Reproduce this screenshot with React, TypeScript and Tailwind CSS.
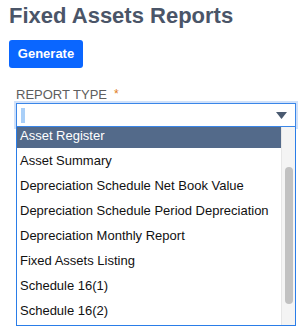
import React from "react";

const items = [
  "Asset Register",
  "Asset Summary",
  "Depreciation Schedule Net Book Value",
  "Depreciation Schedule Period Depreciation",
  "Depreciation Monthly Report",
  "Fixed Assets Listing",
  "Schedule 16(1)",
  "Schedule 16(2)",
];

export default function App() {
  return (
    <div className="w-[302px] h-[327px] overflow-hidden bg-white font-['Liberation_Sans',Arial,sans-serif]">
      <div className="pl-[9px] pt-[3px]">
        <h1 className="text-[22px] leading-[26px] font-bold text-[#4a5568]">
          Fixed Assets Reports
        </h1>
        <button className="mt-[11px] h-[28px] w-[74px] rounded-[3px] bg-[#0a66ff] text-white text-[13px] font-bold">
          Generate
        </button>
      </div>
      <div className="pl-[16px] pr-[6px] mt-[19px]">
        <div className="flex items-center gap-[7px] text-[13px] leading-[15px] text-[#5e5e5e]">
          <span>REPORT TYPE</span>
          <span className="text-[#e07b20] text-[12px]">*</span>
        </div>
        <div className="mt-[1px] h-[24px] border border-[#3a86e8] shadow-[0_0_0_2px_rgba(120,170,240,0.35)] flex items-center justify-between pl-[4px] pr-[8px]">
          <div className="w-[4px] h-[15px] bg-[#a9cff8]" />
          <svg width="11" height="7" viewBox="0 0 11 7">
            <path d="M0 0 L11 0 L5.5 7 Z" fill="#4a5a70" />
          </svg>
        </div>
        <div className="h-[199px] border-x border-b border-[#2a7de8] flex overflow-hidden">
          <div className="flex-1 overflow-hidden">
            <div className="-mt-[4px]">
              {items.map((it, i) => (
                <div
                  key={it}
                  className={
                    i === 0
                      ? "h-[25px] flex items-center pl-[3px] text-[13px] bg-[#536a8a] text-white"
                      : "h-[25px] flex items-center pl-[3px] text-[13px] text-[#111]"
                  }
                >
                  {it}
                </div>
              ))}
            </div>
          </div>
          <div className="w-[14px] bg-[#f4f4f4] border-l border-[#e6e6e6] pt-[40px]">
            <div className="mx-auto w-[8px] h-[137px] rounded-full bg-[#c1c1c1]" />
          </div>
        </div>
      </div>
    </div>
  );
}
